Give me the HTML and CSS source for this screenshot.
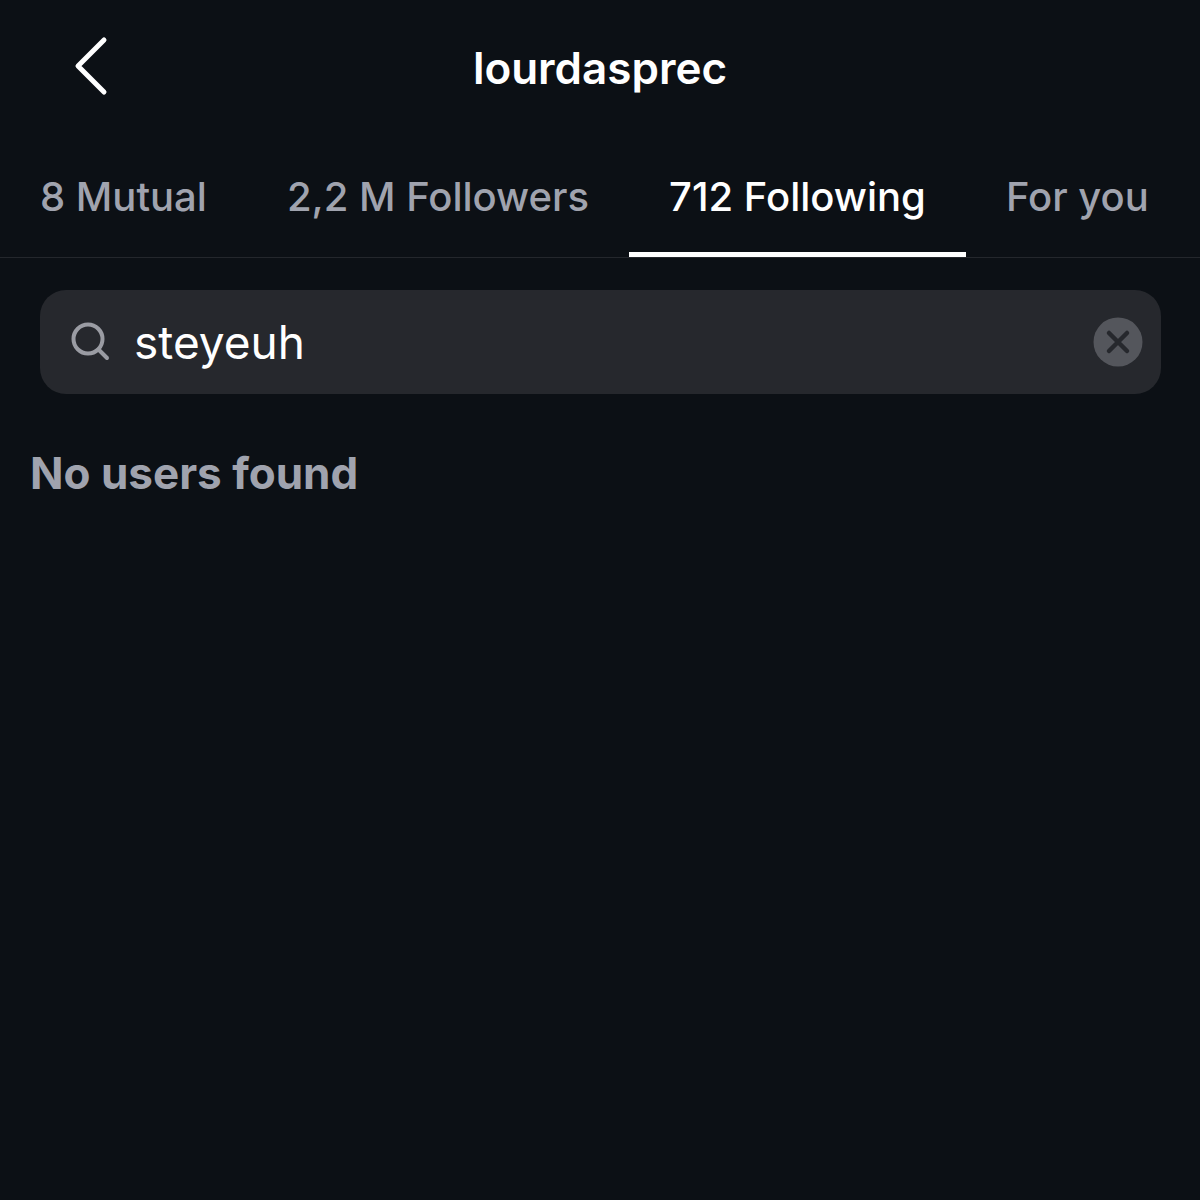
FILE: index.html
```html
<!DOCTYPE html>
<html lang="en">

<head>
    <meta charset="UTF-8">
    <title>lourdasprec</title>
    <link rel="stylesheet" href="styles.css">
</head>

<body>
    <header class="topbar">
        <button class="back" type="button" aria-label="Back">
            <svg width="36" height="60" viewBox="0 0 36 60" fill="none">
                <path d="M31 4 L5 30 L31 56" stroke="#fff" stroke-width="5" stroke-linecap="round" stroke-linejoin="round" />
            </svg>
        </button>
        <h1 class="username">lourdasprec</h1>
    </header>

    <nav class="tabs">
        <a class="tab">8 Mutual</a>
        <a class="tab">2,2 M Followers</a>
        <a class="tab active">712 Following</a>
        <a class="tab">For you</a>
    </nav>

    <main class="content">
        <div class="search">
            <svg class="search-icon" width="40" height="40" viewBox="0 0 40 40" fill="none">
                <circle cx="18" cy="17" r="14.5" stroke="#9a9ca3" stroke-width="4" />
                <path d="M28.5 27.5 L37 36" stroke="#9a9ca3" stroke-width="4" stroke-linecap="round" />
            </svg>
            <span class="query">steyeuh</span>
            <span class="clear">
                <svg width="50" height="50" viewBox="0 0 50 50" fill="none">
                    <circle cx="25" cy="25" r="24.5" fill="#54565c" />
                    <path d="M16 16 L34 34 M34 16 L16 34" stroke="#26282d" stroke-width="4.5" stroke-linecap="round" />
                </svg>
            </span>
        </div>
        <p class="empty">No users found</p>
    </main>
</body>

</html>
```

FILE: styles.css
```css
body {
    margin: 0;
    padding: 0;
    height: 1200px;
    overflow: hidden;
    background-color: #0c1015;
    color: #fff;
    font-family: 'Inter', 'Liberation Sans', sans-serif;
}

.topbar {
    height: 136px;
    display: flex;
    align-items: center;
    justify-content: center;
    position: relative;
}

.back {
    position: absolute;
    left: 73px;
    top: 36px;
    padding: 0;
    border: none;
    background: none;
    line-height: 0;
}

.username {
    margin: 0;
    font-size: 44px;
    font-weight: 600;
}

.tabs {
    height: 122px;
    display: flex;
    box-sizing: border-box;
    border-bottom: 1px solid #24272c;
}

.tab {
    padding: 0 40px;
    height: 121px;
    box-sizing: border-box;
    display: flex;
    align-items: center;
    font-size: 40px;
    font-weight: 500;
    white-space: nowrap;
    color: #a0a3ae;
}

.tab.active {
    color: #fff;
    border-bottom: 5px solid #fff;
    padding-top: 5px;
}

.content {
    padding: 32px 39px 0 40px;
}

.search {
    height: 104px;
    display: flex;
    align-items: center;
    padding: 0 18px 0 30px;
    border-radius: 26px;
    background-color: #26282d;
}

.search-icon {
    flex-shrink: 0;
}

.query {
    margin-left: 24px;
    flex: 1;
    font-size: 46px;
    color: #fff;
}

.clear {
    line-height: 0;
}

.empty {
    margin: 52px 0 0 -10px;
    font-size: 44px;
    font-weight: 700;
    color: #a0a3ae;
}
```
